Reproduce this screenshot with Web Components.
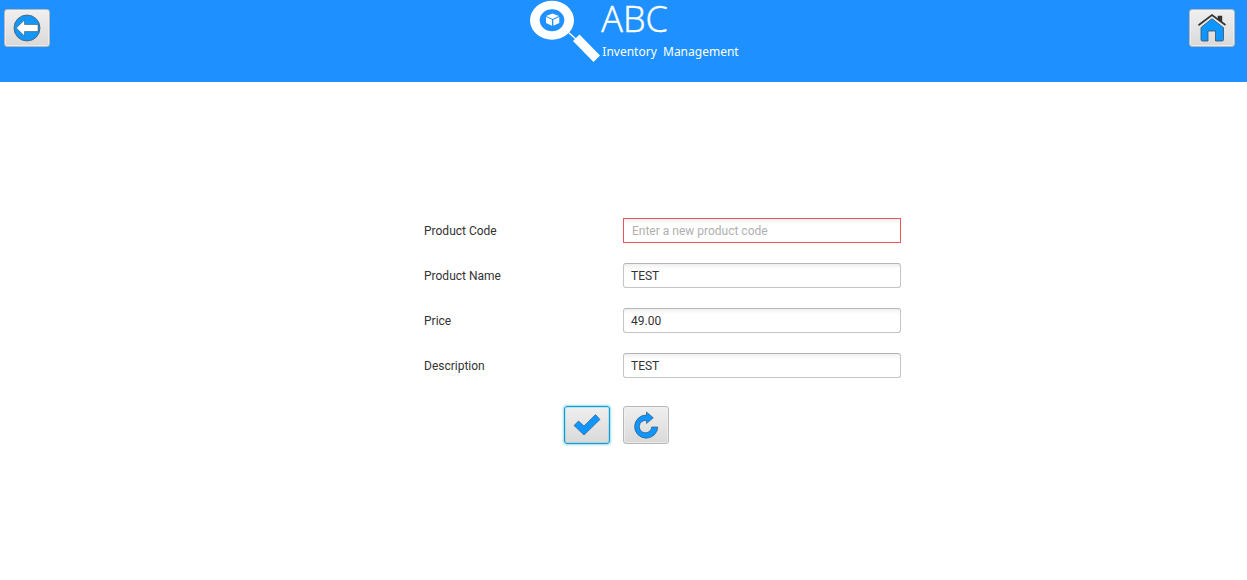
<!DOCTYPE html>
<html lang="en">
<head>
<meta charset="utf-8">
<title>ABC Inventory Management</title>
<style>
  body { margin: 0; background: #fff; font: 12px/15px Roboto, "Liberation Sans", sans-serif; color: #333; }
</style>
</head>
<body>
<inventory-page></inventory-page>
<script>
const define = (name, html, setup) => {
  const template = document.createElement('template');
  template.innerHTML = html;
  customElements.define(name, class extends HTMLElement {
    constructor() {
      super();
      this.attachShadow({ mode: 'open' }).append(template.content.cloneNode(true));
    }
    connectedCallback() { if (setup) setup(this, this.shadowRoot); }
  });
};

define('icon-button', `
  <style>
    :host { display: block; }
    button { display: flex; align-items: center; justify-content: center; box-sizing: border-box;
      width: 46px; height: 38px; padding: 0; border: 1px solid #b8b8b8; border-radius: 3px;
      background: linear-gradient(#efefef, #d9d9d9); box-shadow: inset 0 0 0 1px #f2f2f2aa; }
    :host([primary]) button { border-color: #0f9fd0; box-shadow: inset 0 0 0 1px #18a5d433, 0 0 2px 1px #4cc5ea99; }
  </style>
  <button type="button"><slot></slot></button>`,
  (host, root) => root.querySelector('button').setAttribute('aria-label', host.getAttribute('label')));

define('form-field', `
  <style>
    :host { display: grid; grid-template-columns: 186px 1fr; column-gap: 13px; align-items: center; }
    label { padding-top: 2px; }
    input { box-sizing: border-box; width: 100%; height: 25px; padding: 0 7px; border: 1px solid #c4c4c4;
      border-top-color: #b5b5b5; border-radius: 3px; outline: 0; font: inherit; color: #333;
      background: linear-gradient(#efefef, #fff 5px); }
    input::placeholder { color: #b0b0b0; opacity: 1; }
    :host([invalid]) input { border-color: #e8555a; border-radius: 0; padding: 0 8px; }
  </style>
  <label for="field"></label><input id="field" type="text">`,
  (host, root) => {
    root.querySelector('label').textContent = host.getAttribute('label');
    const input = root.querySelector('input');
    input.value = host.getAttribute('value') || '';
    input.placeholder = host.getAttribute('placeholder') || '';
  });

define('brand-logo', `
  <style>
    :host { display: flex; color: #fff; }
    svg { display: block; width: 71px; height: 64px; }
    .name { font: 300 36px/38px "Open Sans", "Noto Sans", sans-serif; -webkit-text-stroke: .5px #fff; }
    .tag { font: 12px/16px "Noto Sans", sans-serif; padding: 6px 0 0 1px; white-space: nowrap; }
  </style>
  <svg viewBox="0 0 71 64" aria-hidden="true">
    <ellipse cx="22" cy="20.300" rx="22" ry="19.500" fill="#fff"/>
    <path d="M38 32l9 8" stroke="#fff" stroke-width="1.5"/>
    <path d="M49.500 34.500L70 55.500 63.500 62 43 41z" fill="#fff"/>
    <ellipse cx="22" cy="20.300" rx="12.300" ry="11" fill="#1e90ff"/>
    <path d="M22.500 13.500l6.500 2.500-6.500 3-6.500-3zM16 17l6 2.700v6L16 23zM29.300 17l-6 2.700v6l6-2.700z" fill="#fff"/>
  </svg>
  <div><div class="name">ABC</div><div class="tag">Inventory&nbsp; Management</div></div>`);

define('page-header', `
  <style>
    :host { display: flex; justify-content: space-between; align-items: flex-start;
      box-sizing: border-box; min-height: 82px; padding: 0 12px 0 4px; background: #1e90ff; }
    icon-button { margin-top: 9px; }
    brand-logo { padding-left: 30px; }
  </style>
  <icon-button label="Back"><svg width="30" height="30" viewBox="0 0 30 30" aria-hidden="true">
    <circle cx="15" cy="15" r="13" fill="#1296f8" stroke="#4a5a68" stroke-width=".8"/>
    <path d="M4.300 15L12.500 7v4.500H26v7H12.500V23z" fill="#fff" stroke="#34424e" stroke-width=".5"/></svg></icon-button>
  <brand-logo></brand-logo>
  <icon-button label="Home"><svg width="30" height="30" viewBox="0 0 30 30" aria-hidden="true">
    <path d="M15 5.500l11.500 9v12q0 1.500-1.500 1.500H18.500V18h-7.500v10H5.500Q4 28 4 26.500V14.500z" fill="#0d96ff" stroke="#3c4f60" stroke-width=".8"/>
    <path d="M1.500 13.500L15 3l13.500 10.500" fill="none" stroke="#e8e8e8" stroke-width="3"/>
    <path d="M20.700 2.800h4.500v7l-4.500-3.500z" fill="#333"/>
    <path d="M1.500 12.300L15 2l13.500 10" fill="none" stroke="#333" stroke-width="1.700"/></svg></icon-button>`);

define('product-form', `
  <style>
    :host { display: block; width: 100%; max-width: 477px; }
    form { display: grid; row-gap: 20px; }
    .actions { display: grid; grid-template-columns: 186px 1fr; column-gap: 13px; padding-top: 8px; }
    .actions icon-button:first-child { justify-self: end; }
  </style>
  <form>
    <form-field label="Product Code" placeholder="Enter a new product code" invalid></form-field>
    <form-field label="Product Name" value="TEST"></form-field>
    <form-field label="Price" value="49.00"></form-field>
    <form-field label="Description" value="TEST"></form-field>
    <div class="actions">
      <icon-button label="Save" primary><svg width="30" height="30" viewBox="0 0 30 30" aria-hidden="true">
        <path d="M2 15.500l4.500-4.500 5.500 5L23.500 4.500 28 9.500 12 25z" fill="#0d96ff" stroke="#35506a" stroke-width=".6" stroke-linejoin="round"/></svg></icon-button>
      <icon-button label="Reset"><svg width="30" height="30" viewBox="0 0 30 30" aria-hidden="true">
        <path d="M15.500 2L22.300 7.800l-6.800 5.700V10.500a6.200 6.200 0 1 0 5.200 6.500H26.800A11.600 11.600 0 1 1 15.500 5z" fill="#0d96ff" stroke="#35475a" stroke-width=".6"/></svg></icon-button>
    </div>
  </form>`);

define('inventory-page', `
  <style>
    :host { display: block; }
    main { display: flex; justify-content: center; padding: 136px 0 40px 78px; }
  </style>
  <page-header></page-header>
  <main><product-form></product-form></main>`);
</script>
</body>
</html>
